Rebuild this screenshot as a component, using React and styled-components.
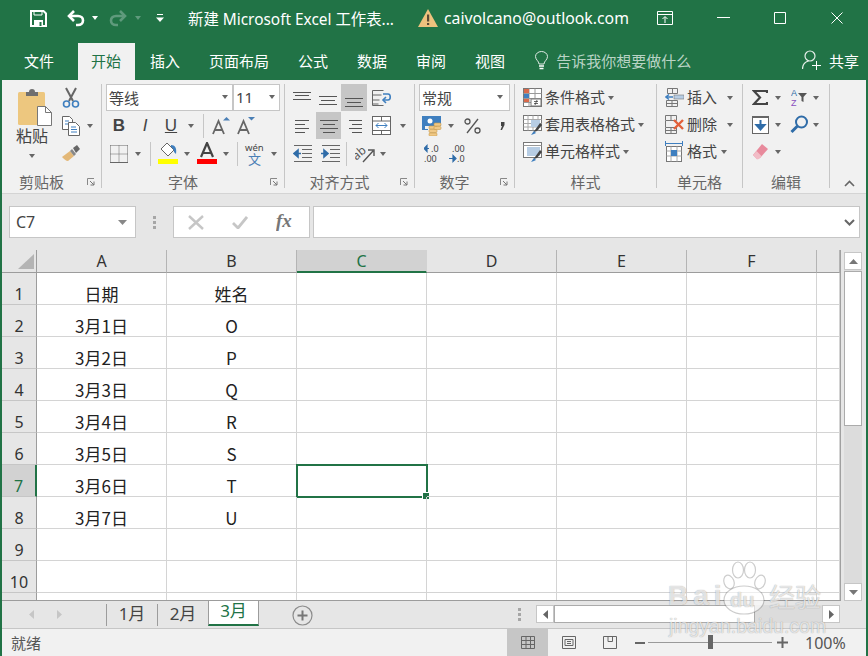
import styled, { createGlobalStyle } from "styled-components";

const UI_FONT = `"Noto Sans", "Noto Sans CJK SC", sans-serif`;
const GREEN = "#217346";

const GlobalStyle = createGlobalStyle`
  html, body {
    margin: 0;
    padding: 0;
    background: #e6e6e6;
    font-family: ${UI_FONT};
  }
  * { box-sizing: border-box; }
  svg { display: block; flex: none; }
`;

const Window = styled.div`
  position: relative;
  width: 868px;
  height: 656px;
  overflow: hidden;
  display: flex;
  flex-direction: column;
  border-left: 2px solid ${GREEN};
  border-right: 2px solid ${GREEN};
  background: #e6e6e6;
`;

/* ---------- title bar ---------- */
const TitleBar = styled.div`
  display: flex;
  align-items: center;
  height: 43px;
  padding: 0 0 7px 28px;
  background: ${GREEN};
  color: #fff;
  flex: none;
`;
const TitleItem = styled.div`
  display: flex;
  align-items: center;
  justify-content: center;
  margin-left: ${(p) => p.$ml || 0}px;
`;
const TitleText = styled.span`
  font-size: ${(p) => p.$size}px;
  margin-left: ${(p) => p.$ml || 0}px;
  white-space: nowrap;
`;
const QatCaret = styled.i`
  display: block;
  margin-left: ${(p) => p.$ml || 0}px;
  border-left: 3.5px solid transparent;
  border-right: 3.5px solid transparent;
  border-top: 4px solid ${(p) => p.$color || "#fff"};
`;

/* ---------- tabs ---------- */
const TabBar = styled.div`
  display: flex;
  align-items: stretch;
  height: 37px;
  background: ${GREEN};
  padding-left: 8px;
  flex: none;
`;
const Tab = styled.div`
  display: flex;
  align-items: center;
  padding: 0 14px 3px ${(p) => (p.$active ? 13 : 14)}px;
  margin-right: ${(p) => p.$mr ?? 1}px;
  font-size: 15px;
  color: ${(p) => (p.$active ? GREEN : "#fff")};
  background: ${(p) => (p.$active ? "#f1f1f1" : "transparent")};
  white-space: nowrap;
`;
const TellMe = styled.div`
  display: flex;
  align-items: center;
  gap: 8px;
  margin-left: 15px;
  padding-bottom: 2px;
  font-size: 15px;
  color: #b9d3c5;
  white-space: nowrap;
`;
const Share = styled.div`
  display: flex;
  align-items: center;
  gap: 8px;
  margin-left: auto;
  padding: 0 7px 3px 0;
  font-size: 15px;
  color: #fff;
`;

/* ---------- ribbon ---------- */
const Ribbon = styled.div`
  display: flex;
  height: 114px;
  background: #f1f1f1;
  border-bottom: 1px solid #d4d4d4;
  flex: none;
`;
const Group = styled.section`
  display: flex;
  flex-direction: column;
  width: ${(p) => p.$w}px;
  height: 104px;
  margin-top: 4px;
  border-right: 1px solid #c6c6c6;
`;
const GroupBody = styled.div`
  height: 88px;
  flex: none;
  display: flex;
  padding-left: ${(p) => p.$pl || 0}px;
`;
const Stack = styled.div`
  display: flex;
  flex-direction: column;
  gap: ${(p) => p.$gap ?? 1}px;
`;
const Row = styled.div`
  display: flex;
  align-items: center;
  height: 27px;
`;
const GroupFoot = styled.div`
  display: grid;
  grid-template-columns: ${(p) => (p.$launcher ? "1fr 20px" : "1fr")};
  align-items: center;
  justify-items: center;
  height: 20px;
  flex: none;
  font-size: 15px;
  line-height: 20px;
  color: #666;
`;
const Tool = styled.div`
  display: flex;
  align-items: center;
  justify-content: center;
  width: ${(p) => p.$w || 26}px;
  height: 27px;
  flex: none;
  margin-left: ${(p) => p.$ml || 0}px;
  background: ${(p) => (p.$active ? "#c6c6c6" : "transparent")};
  color: #444;
`;
const LetterTool = styled(Tool)`
  font-family: "Liberation Sans", sans-serif;
  font-size: 17px;
  font-weight: ${(p) => (p.$bold ? 700 : 400)};
  font-style: ${(p) => (p.$italic ? "italic" : "normal")};
  text-decoration: ${(p) => (p.$under ? "underline" : "none")};
`;
const Caret = styled.div`
  display: flex;
  align-items: center;
  justify-content: center;
  width: ${(p) => p.$w || 14}px;
  height: 27px;
  flex: none;
  margin-left: ${(p) => p.$ml || 0}px;
  &::after {
    content: "";
    border-left: 3.5px solid transparent;
    border-right: 3.5px solid transparent;
    border-top: 4px solid #666;
  }
`;
const RuleV = styled.div`
  width: 1px;
  height: 24px;
  background: #c6c6c6;
  flex: none;
  margin: 0 ${(p) => p.$mr ?? 5}px 0 ${(p) => p.$ml ?? 4}px;
`;
const Combo = styled.div`
  display: flex;
  align-items: center;
  justify-content: space-between;
  width: ${(p) => p.$w}px;
  height: 27px;
  padding: 0 0 1px 2px;
  background: #fff;
  border: 1px solid #c6c6c6;
  margin-left: ${(p) => p.$ml || 0}px;
  font-size: 15px;
  color: #444;
  flex: none;
`;
const PasteButton = styled.div`
  display: flex;
  flex-direction: column;
  align-items: center;
  width: 40px;
  padding-top: 4px;
  font-size: 16px;
  line-height: 20px;
  color: #444;
`;
const PasteIcon = styled.div`
  width: 34px;
  height: 38px;
  margin-left: 6px;
`;
const PasteCaret = styled.i`
  display: block;
  margin-top: 8px;
  border-left: 3.5px solid transparent;
  border-right: 3.5px solid transparent;
  border-top: 4px solid #666;
`;
const CommandRow = styled.div`
  display: flex;
  align-items: center;
  height: 27px;
  font-size: 15px;
  color: #444;
  white-space: nowrap;
`;
const CommandLabel = styled.span`
  line-height: 24px;
  height: 26px;
`;
const CommandIcon = styled.div`
  display: flex;
  align-items: center;
  width: ${(p) => p.$w || 22}px;
  flex: none;
`;
const Collapse = styled.div`
  display: flex;
  align-items: flex-end;
  flex: 1;
  justify-content: center;
  padding: 0 0 6px 2px;
`;

/* ---------- formula bar ---------- */
const FormulaBar = styled.div`
  display: flex;
  align-items: center;
  height: 56px;
  padding: 0 6px 0 7px;
  flex: none;
`;
const NameBox = styled.div`
  display: flex;
  align-items: center;
  justify-content: space-between;
  width: 127px;
  height: 32px;
  padding: 0 8px 0 6px;
  background: #fff;
  border: 1px solid #c6c6c6;
  font-size: 16px;
  color: #444;
`;
const Grip = styled.div`
  display: flex;
  flex-direction: column;
  gap: 2px;
  margin: ${(p) => p.$margin};
  i {
    display: block;
    width: 3px;
    height: 3px;
    background: #a6a6a6;
  }
`;
const FxBox = styled.div`
  display: flex;
  align-items: center;
  width: 137px;
  height: 32px;
  background: #fff;
  border: 1px solid #c6c6c6;
  padding-left: 14px;
  gap: 28px;
`;
const FormulaInput = styled.div`
  flex: 1;
  display: flex;
  align-items: center;
  justify-content: flex-end;
  height: 32px;
  margin-left: 3px;
  padding-right: 4px;
  background: #fff;
  border: 1px solid #c6c6c6;
`;

/* ---------- sheet ---------- */
const SheetArea = styled.div`
  display: flex;
  height: 351px;
  flex: none;
`;
const Sheet = styled.div`
  width: 839px;
  overflow: hidden;
  border-right: 1px solid #a0a0a0;
  border-bottom: 1px solid #9c9c9c;
  background: #fff;
  flex: none;
`;
const GridRow = styled.div`
  display: grid;
  grid-template-columns: 35px repeat(6, 130px) 1fr;
  grid-template-rows: ${(p) => p.$h || 32}px;
  height: ${(p) => p.$h || 32}px;
`;
const ColHead = styled.div`
  display: flex;
  align-items: center;
  justify-content: center;
  font-size: 16px;
  line-height: 20px;
  background: ${(p) => (p.$selected ? "#d2d2d2" : "#e6e6e6")};
  color: ${(p) => (p.$selected ? GREEN : "#333")};
  border-right: 1px solid ${(p) => (p.$selected ? "#d2d2d2" : "#b4b4b4")};
  border-bottom: ${(p) => (p.$selected ? `2px solid ${GREEN}` : "1px solid #9c9c9c")};
`;
const Corner = styled(ColHead)`
  justify-content: flex-end;
  align-items: flex-end;
  padding: 0 2px 3px 0;
  border-right-color: #9c9c9c;
`;
const RowHead = styled.div`
  display: flex;
  align-items: center;
  justify-content: center;
  padding-top: 11px;
  font-size: 16px;
  line-height: 20px;
  background: ${(p) => (p.$selected ? "#d2d2d2" : "#e6e6e6")};
  color: ${(p) => (p.$selected ? GREEN : "#333")};
  border-right: ${(p) => (p.$selected ? `2px solid ${GREEN}` : "1px solid #9c9c9c")};
  border-bottom: 1px solid #c6c6c6;
`;
const Cell = styled.div`
  position: relative;
  display: flex;
  align-items: center;
  justify-content: center;
  padding-top: 10px;
  font-family: "Noto Sans CJK SC", sans-serif;
  font-size: 17px;
  line-height: 20px;
  color: #222;
  border-right: 1px solid #d4d4d4;
  border-bottom: 1px solid #d4d4d4;
`;
const Selection = styled.div`
  position: absolute;
  left: -1px;
  top: -1px;
  right: -2px;
  bottom: -2px;
  border: 2px solid ${GREEN};
  &::after {
    content: "";
    position: absolute;
    right: -4px;
    bottom: -4px;
    width: 6px;
    height: 6px;
    background: ${GREEN};
    border: 1px solid #fff;
  }
`;
const VScroll = styled.div`
  display: flex;
  flex-direction: column;
  width: 18px;
  margin-left: 3px;
  padding-top: 2px;
  gap: 1px;
  background: linear-gradient(#e6e6e6 20px, #dcdcdc 20px);
`;
const ScrollBtn = styled.div`
  display: flex;
  align-items: center;
  justify-content: center;
  width: 18px;
  height: 18px;
  background: #fff;
  border: 1px solid #c6c6c6;
  flex: none;
`;
const VThumb = styled.div`
  height: 155px;
  background: #fff;
  border: 1px solid #ababab;
  margin-bottom: auto;
`;

/* ---------- sheet tabs ---------- */
const SheetBar = styled.div`
  display: flex;
  align-items: flex-start;
  height: 28px;
  border-bottom: 1px solid #c6c6c6;
  flex: none;
`;
const SheetNav = styled.div`
  display: flex;
  align-items: center;
  gap: 23px;
  width: 104px;
  height: 22px;
  padding: 4px 0 0 27px;
`;
const SheetTab = styled.div`
  display: flex;
  justify-content: center;
  width: 51px;
  height: ${(p) => (p.$active ? 26 : 22)}px;
  margin-top: ${(p) => (p.$active ? -1 : 3)}px;
  font-size: 17px;
  line-height: 20px;
  color: ${(p) => (p.$active ? GREEN : "#444")};
  background: ${(p) => (p.$active ? "#fff" : "transparent")};
  border-left: 1px solid #9c9c9c;
  border-right: ${(p) => (p.$active ? "1px solid #9c9c9c" : "none")};
  border-top: ${(p) => (p.$active ? "1px solid #9c9c9c" : "none")};
  border-bottom: ${(p) => (p.$active ? `2px solid ${GREEN}` : "none")};
`;
const AddSheet = styled.div`
  margin: 4px 0 0 33px;
`;
const HScroll = styled.div`
  display: flex;
  width: 304px;
  height: 18px;
  margin: 4px 0 0 0;
  background: #dcdcdc;
`;
const HThumb = styled.div`
  width: 201px;
  background: #fff;
  border: 1px solid #ababab;
  margin: 0 auto 0 0;
`;

/* ---------- status bar ---------- */
const StatusBar = styled.div`
  display: flex;
  align-items: center;
  flex: 1;
  background: #f1f1f1;
  padding-left: 9px;
  font-size: 15px;
  color: #555;
`;
const ViewBtn = styled.div`
  display: flex;
  align-items: center;
  justify-content: center;
  width: 41px;
  align-self: stretch;
  background: ${(p) => (p.$active ? "#c6c6c6" : "transparent")};
  margin-left: ${(p) => p.$ml || 0}px;
`;
const ZoomMinus = styled.i`
  display: block;
  width: 10px;
  height: 2px;
  margin-left: 5px;
  background: #666;
`;
const ZoomTrack = styled.div`
  position: relative;
  width: 124px;
  height: 1px;
  background: #9a9a9a;
  margin: 0 5px 0 3px;
  &::after {
    content: "";
    position: absolute;
    left: 60px;
    top: -7px;
    width: 5px;
    height: 14px;
    background: #666;
  }
`;
const ZoomPct = styled.span`
  margin-left: 17px;
  font-size: 16px;
  color: #555;
`;

/* ---------- watermark ---------- */
const Watermark = styled.div`
  position: absolute;
  left: 664px;
  top: 560px;
  width: 165px;
  height: 78px;
  color: rgba(255, 255, 255, 0.72);
  text-shadow: 0 0 1px rgba(0, 0, 0, 0.4);
  font-family: "Liberation Sans", sans-serif;
  pointer-events: none;
`;
const Paw = styled.div`
  position: absolute;
  left: 54px;
  top: 0;
`;
const MarkBai = styled.div`
  position: absolute;
  left: 2px;
  top: 20px;
  font-size: 28px;
  line-height: 32px;
  font-weight: 700;
  letter-spacing: 5px;
`;
const MarkDu = styled.div`
  position: absolute;
  left: 64px;
  top: 28px;
  font-size: 20px;
  line-height: 24px;
  font-weight: 700;
`;
const MarkCn = styled.div`
  position: absolute;
  left: 103px;
  top: 19px;
  font-family: "Noto Sans CJK SC", sans-serif;
  font-size: 26px;
  line-height: 34px;
  white-space: nowrap;
`;
const MarkUrl = styled.div`
  position: absolute;
  left: 3px;
  top: 55px;
  font-size: 19.5px;
  line-height: 22px;
  white-space: nowrap;
`;

/* ---------- drawings ---------- */
const Lines = ({ rows }) => (
  <svg width="26" height="27" viewBox="0 0 26 27">
    {rows.map(([a, b, y]) => (
      <path key={y} d={`M${a} ${y + 0.5}H${b}`} stroke="#555" fill="none" />
    ))}
  </svg>
);

const Paste = () => (
  <svg width="34" height="38" viewBox="0 0 34 38">
    <rect x="0" y="4" width="27" height="33" rx="1.5" fill="#edc77f" />
    <path d="M8 4h3a3 3 0 0 1 6 0h3v4H8z" fill="#6f6f6f" />
    <path d="M19.5 18.5h8l6 6v13h-14z" fill="#fff" stroke="#777" />
    <path d="M27.5 18.5v6h6" fill="none" stroke="#777" />
  </svg>
);
const Scissors = () => (
  <svg width="18" height="22" viewBox="0 0 18 22">
    <path d="M4 1l7 13M14 1L7 14" stroke="#666" strokeWidth="2" fill="none" />
    <circle cx="4.5" cy="17" r="3" fill="none" stroke="#3f7fbf" strokeWidth="1.6" />
    <circle cx="13.5" cy="17" r="3" fill="none" stroke="#3f7fbf" strokeWidth="1.6" />
  </svg>
);
const Copy = () => (
  <svg width="18" height="20" viewBox="0 0 18 20">
    <path d="M.5.5h7l3 3v10H.5z" fill="#fff" stroke="#666" />
    <path d="M6.5 6.5h7l4 4v9h-11z" fill="#fff" stroke="#666" />
    <path d="M3 5h4M3 8h3M9 11h5M9 13.5h6M9 16h6" stroke="#3f7fbf" fill="none" />
  </svg>
);
const Brush = () => (
  <svg width="19" height="17" viewBox="0 0 19 17">
    <path d="M0 12l8-6 4 5-6 5c-2 0-4-2-6-4z" fill="#e3b878" />
    <path d="M8 6l2-2 4 5-2 2z" fill="#888" />
    <path d="M11 3l4-3 3 4-4 4z" fill="#666" />
  </svg>
);
const GrowA = ({ down }) => (
  <svg width="20" height="19" viewBox="0 0 20 19">
    <path d="M2 18L7.5 5 13 18M4 14h7" stroke="#666" strokeWidth="1.8" fill="none" />
    <path d={down ? "M12 1h7l-3.5 3.5z" : "M12 4.5h7L15.5 1z"} fill="#4a7fb5" />
  </svg>
);
const BorderIcon = () => (
  <svg width="18" height="18" viewBox="0 0 18 18">
    <path
      d="M.5.5h17M.5 9h17M.5.5v17M9 .5v17M17.5 .5v17"
      stroke="#666"
      strokeDasharray="1 1"
      fill="none"
    />
    <path d="M0 17.5h18" stroke="#666" fill="none" />
  </svg>
);
const FillIcon = () => (
  <svg width="20" height="23" viewBox="0 0 20 23">
    <path d="M9 1l7 7-6 6-7-7z" fill="#fff" stroke="#666" />
    <path d="M13 3c4 0 6 3 5 9l-2-2c0-2-1-4-3-5z" fill="#3f7fbf" />
    <rect y="17" width="20" height="5" fill="#ffff00" />
  </svg>
);
const ColorIcon = () => (
  <svg width="20" height="23" viewBox="0 0 20 23">
    <path d="M4 15L10 1l6 14M6 11h8" stroke="#444" strokeWidth="2.2" fill="none" />
    <rect y="17" width="20" height="5" fill="#ff0000" />
  </svg>
);
const Wen = () => (
  <svg width="22" height="24" viewBox="0 0 22 24">
    <text x="1" y="9" fontSize="9.5" fontFamily="Noto Sans" fill="#444">wén</text>
    <text x="4" y="22" fontSize="13" fontFamily="Noto Sans CJK SC" fill="#4a7fb5">文</text>
  </svg>
);
const Wrap = () => (
  <svg width="20" height="18" viewBox="0 0 20 18">
    <path d="M.5 1.5h11M.5 1.5v15h11M.5 6h9M.5 11h7M.5 15h6" stroke="#666" fill="none" />
    <path d="M11 5h5c3 0 3 6 0 6h-4" stroke="#3f7fbf" strokeWidth="1.6" fill="none" />
    <path d="M14 8l-3 3 3 3" stroke="#3f7fbf" strokeWidth="1.6" fill="none" />
  </svg>
);
const Merge = () => (
  <svg width="20" height="20" viewBox="0 0 20 20">
    <rect x=".5" y=".5" width="18" height="18" fill="#fff" stroke="#666" />
    <path d="M.5 5h18M.5 14.5h18M9.5 .5V5M9.5 14.5v4" stroke="#666" fill="none" />
    <path d="M4 9.5h11M6.5 7l-2.5 2.5L6.5 12M12.5 7l2.5 2.5-2.5 2.5" stroke="#3f7fbf" fill="none" />
  </svg>
);
const Indent = ({ right }) => (
  <svg width="20" height="17" viewBox="0 0 20 17">
    <path d="M1 .5h18M9 4.5h10M9 8.5h10M9 12.5h10M1 16.5h18" stroke="#666" fill="none" />
    {right ? (
      <path d="M0 8.5h5M3 5l4 3.5L3 12z" stroke="#2f6ca8" strokeWidth="1.6" fill="#2f6ca8" />
    ) : (
      <path d="M8 8.5H3M5 5L1 8.5 5 12z" stroke="#2f6ca8" strokeWidth="1.6" fill="#2f6ca8" />
    )}
  </svg>
);
const Orient = () => (
  <svg width="20" height="20" viewBox="0 0 20 20">
    <text x="-2" y="12" fontSize="12" fontFamily="Noto Sans" fill="#555" transform="rotate(-40 6 10)">ab</text>
    <path d="M8 18L18 7M13 6h6v6" stroke="#555" strokeWidth="1.4" fill="none" />
  </svg>
);
const Currency = () => (
  <svg width="20" height="20" viewBox="0 0 20 20">
    <rect x="0" y="0" width="19" height="10" fill="#3f7fbf" />
    <circle cx="8" cy="5" r="2.5" fill="#fff" />
    <path d="M0 10h3v3h3v1H0z" fill="#3f7fbf" />
    <g fill="#f0c987" stroke="#c99b4a" strokeWidth=".6">
      <rect x="7" y="10" width="8" height="3" rx="1" />
      <rect x="7" y="13.5" width="8" height="3" rx="1" />
      <rect x="7" y="17" width="8" height="3" rx="1" />
      <rect x="12" y="7" width="7" height="3" rx="1" />
      <rect x="12" y="10.5" width="7" height="3" rx="1" />
    </g>
  </svg>
);
const Decimal = ({ more }) => (
  <svg width="18" height="20" viewBox="0 0 18 20" fontFamily="Noto Sans" fontSize="9" fill="#444">
    {more ? (
      <>
        <path d="M0 4.5h5M3 1.5L0 4.5l3 3z" stroke="#2f6ca8" strokeWidth="1.2" fill="#2f6ca8" />
        <text x="7" y="8">.0</text>
        <text x="0" y="18">.00</text>
      </>
    ) : (
      <>
        <text x="3" y="8">.00</text>
        <path d="M0 14.5h5M4 11.5l3 3-3 3z" stroke="#2f6ca8" strokeWidth="1.2" fill="#2f6ca8" />
        <text x="8" y="18">.0</text>
      </>
    )}
  </svg>
);
const CondFormat = () => (
  <svg width="19" height="19" viewBox="0 0 19 19">
    <rect x=".5" y=".5" width="18" height="18" fill="#fff" stroke="#777" />
    <path d="M6 .5v18M12 .5V10M.5 5.5h18M.5 10.5h18M.5 14.5H8" stroke="#999" fill="none" />
    <rect x="1" y="1" width="5" height="4" fill="#d9694a" />
    <rect x="1" y="6" width="5" height="4" fill="#3f7fbf" />
    <rect x="1" y="11" width="5" height="3" fill="#d9694a" />
    <rect x="8" y="11" width="10" height="7" fill="#fff" stroke="#777" />
    <path d="M11 13.5h4M11 15.5h4M14 12l-2 5" stroke="#444" strokeWidth=".8" fill="none" />
  </svg>
);
const TableFormat = ({ plain }) => (
  <svg width="20" height="20" viewBox="0 0 20 20">
    <rect x=".5" y=".5" width="18" height="15" fill="#fff" stroke="#777" />
    {plain ? (
      <>
        <path d="M.5 3.5h18" stroke="#999" fill="none" />
        <rect x="4" y="5" width="13" height="9" fill="#b7cde4" />
      </>
    ) : (
      <>
        <path d="M.5 4.5h18M.5 8.5h18M.5 12h18M5 .5v15M10 .5v15M15 .5v15" stroke="#aaa" fill="none" />
        <rect x="8" y="5" width="9" height="7" fill="#b7cde4" />
      </>
    )}
    <path d="M9 19l3-4 5-7 2 2-5 6-3 1z" fill="#444" />
    <path d="M8 20l3-4 2 2-2 1z" fill="#3f7fbf" />
  </svg>
);
const CellInsert = () => (
  <svg width="19" height="19" viewBox="0 0 19 19">
    <path d="M2.5 .5h10v5h-10zM7.5 .5v5M1.5 12.5h11v6h-11zM7 12.5v6M1.5 15.5h11" stroke="#777" fill="none" />
    <rect x="9" y="7" width="10" height="4" fill="#b7cde4" stroke="#777" strokeWidth=".6" />
    <path d="M1 9h7M4 6.5L1 9l3 2.5" stroke="#3f7fbf" strokeWidth="1.5" fill="none" />
  </svg>
);
const CellDelete = () => (
  <svg width="20" height="19" viewBox="0 0 20 19">
    <path d="M.5 .5h11v5H.5zM6 .5v5M.5 12.5h11v6H.5zM6 12.5v6M.5 15.5h11M.5 6v6" stroke="#777" fill="none" />
    <path d="M9 5l9 9M18 5l-9 9" stroke="#e2603a" strokeWidth="2.4" fill="none" />
  </svg>
);
const CellFormat = () => (
  <svg width="20" height="22" viewBox="0 0 20 22">
    <path d="M.5 2.5h17M.5 0v5M17.5 0v5" stroke="#3f7fbf" fill="none" />
    <rect x="1.5" y="5.5" width="15" height="15" fill="#fff" stroke="#777" />
    <path d="M1.5 10h15M1.5 15h15M6 5.5v15M12 5.5v15" stroke="#aaa" fill="none" />
    <rect x="6" y="9" width="6" height="6" fill="#3f7fbf" />
  </svg>
);
const FillDown = () => (
  <svg width="17" height="18" viewBox="0 0 17 18">
    <rect x=".5" y=".5" width="16" height="17" fill="#fff" stroke="#666" />
    <path d="M0 0h17v2H0z" fill="#666" />
    <path d="M8.5 4v8M4.5 9l4 4.5 4-4.5z" stroke="#2f6ca8" strokeWidth="2" fill="#2f6ca8" />
  </svg>
);
const Search = () => (
  <svg width="19" height="19" viewBox="0 0 19 19">
    <circle cx="11.5" cy="7" r="5.5" fill="none" stroke="#2f6ca8" strokeWidth="2" />
    <path d="M7.5 11L1.5 17" stroke="#2f6ca8" strokeWidth="3" fill="none" />
  </svg>
);
const Eraser = () => (
  <svg width="17" height="17" viewBox="0 0 17 17">
    <path d="M10 1l6 5-8 9-3 1-4-4z" fill="#e88a9c" />
    <path d="M1 12l3.5-4 5 5L7 16l-2 .5z" fill="#f2bcc6" />
  </svg>
);
const SortFilter = () => (
  <svg width="16" height="19" viewBox="0 0 16 19">
    <text x="0" y="8" fontSize="9" fontFamily="Liberation Sans" fill="#2f6ca8">A</text>
    <text x="0" y="18" fontSize="9" fontFamily="Liberation Sans" fill="#8a4fbf">Z</text>
    <path d="M7 5h9l-3.5 4v5l-2-1V9z" fill="#555" />
  </svg>
);
const Launcher = () => (
  <svg width="8" height="8" viewBox="0 0 8 8">
    <path d="M.5 7V.5H7" stroke="#888" fill="none" />
    <path d="M3 3l4 4M7 3.5V7H3.5" stroke="#777" fill="none" />
  </svg>
);

const GridData = [
  ["日期", "姓名"],
  ["3月1日", "O"],
  ["3月2日", "P"],
  ["3月3日", "Q"],
  ["3月4日", "R"],
  ["3月5日", "S"],
  ["3月6日", "T"],
  ["3月7日", "U"],
  ["", ""],
  ["", ""],
  ["", ""],
];

const ALIGN_ICONS = [
  [[3, 21, 8], [5, 19, 11], [3, 21, 15]],
  [[3, 21, 12], [5, 19, 16], [3, 21, 20]],
  [[4, 22, 14], [6, 20, 18], [4, 22, 22]],
  [[5, 19, 8], [5, 15, 12], [5, 19, 16], [5, 15, 20]],
  [[4, 22, 8], [7, 19, 12], [4, 22, 16], [7, 19, 20]],
  [[8, 21, 8], [11, 21, 12], [8, 21, 16], [11, 21, 20]],
];

export default function App() {
  return (
    <Window>
      <GlobalStyle />
      <TitleBar>
        <TitleItem>
          <svg width="17" height="17" viewBox="0 0 17 17">
            <path d="M1 1h12.5L16 3.5V16H1z" fill="none" stroke="#fff" strokeWidth="2" />
            <path d="M4 1h8v4H4z" fill="none" stroke="#fff" />
            <path d="M4 10h9v6H4z" fill="#fff" />
            <path d="M9.5 12h2v4h-2z" fill={GREEN} />
          </svg>
        </TitleItem>
        <TitleItem $ml={19}>
          <svg width="19" height="17" viewBox="0 0 19 17">
            <path d="M3 6h9c3 0 5 2 5 4.500S15 15 12 15h-2" stroke="#fff" strokeWidth="2.6" fill="none" />
            <path d="M8 1L3 6l5 5" stroke="#fff" strokeWidth="2.6" fill="none" />
          </svg>
        </TitleItem>
        <QatCaret $ml={7} />
        <TitleItem $ml={11}>
          <svg width="19" height="17" viewBox="0 0 19 17">
            <path d="M16 6H7c-3 0-5 2-5 4.500S4 15 7 15h2" stroke="#5f9a7c" strokeWidth="2.6" fill="none" />
            <path d="M11 1l5 5-5 5" stroke="#5f9a7c" strokeWidth="2.6" fill="none" />
          </svg>
        </TitleItem>
        <QatCaret $ml={7} $color="#5f9a7c" />
        <TitleItem $ml={15}>
          <svg width="8" height="9" viewBox="0 0 8 9">
            <path d="M1 .5h6" stroke="#fff" fill="none" />
            <path d="M0 3.5h8L4 8z" fill="#fff" />
          </svg>
        </TitleItem>
        <TitleText $ml={24} $size={15.4}>新建 Microsoft Excel 工作表...</TitleText>
        <TitleItem $ml={24}>
          <svg width="20" height="18" viewBox="0 0 20 18">
            <path d="M10 0l10 18H0z" fill="#eec27e" />
            <path d="M9 5.5h2.2v7H9zM9 14h2.2v2H9z" fill="#5a4a35" />
          </svg>
        </TitleItem>
        <TitleText $ml={6} $size={15.8}>caivolcano@outlook.com</TitleText>
        <TitleItem $ml={28}>
          <svg width="16" height="14" viewBox="0 0 16 14">
            <path d="M.5 .5h15v13H.5zM.5 3.5h15" stroke="#fff" fill="none" />
            <path d="M8 12V6M5.5 8L8 5.5 10.5 8" stroke="#fff" fill="none" />
          </svg>
        </TitleItem>
        <TitleItem $ml={44}>
          <svg width="13" height="12" viewBox="0 0 13 12">
            <path d="M0 5.5h13" stroke="#fff" fill="none" />
          </svg>
        </TitleItem>
        <TitleItem $ml={44}>
          <svg width="12" height="12" viewBox="0 0 12 12">
            <path d="M.5 .5h11v11H.5z" stroke="#fff" fill="none" />
          </svg>
        </TitleItem>
        <TitleItem $ml={45}>
          <svg width="12" height="12" viewBox="0 0 12 12">
            <path d="M.5 .5l11 11M11.5 .5l-11 11" stroke="#fff" fill="none" />
          </svg>
        </TitleItem>
      </TitleBar>

      <TabBar>
        <Tab $mr={10}>文件</Tab>
        <Tab $active>开始</Tab>
        <Tab>插入</Tab>
        <Tab>页面布局</Tab>
        <Tab>公式</Tab>
        <Tab>数据</Tab>
        <Tab>审阅</Tab>
        <Tab>视图</Tab>
        <TellMe>
          <svg width="13" height="19" viewBox="0 0 13 19">
            <path d="M4 13c0-3-3.5-4-3.5-7.5a6 5 0 0 1 12 0C12.5 9 9 10 9 13z" fill="none" stroke="#dfeae4" />
            <path d="M4 15h5M4.5 17.5h4" stroke="#fff" strokeWidth="1.4" fill="none" />
          </svg>
          告诉我你想要做什么
        </TellMe>
        <Share>
          <svg width="19" height="20" viewBox="0 0 19 20">
            <circle cx="8" cy="6" r="5" fill="none" stroke="#e6efea" strokeWidth="1.2" />
            <path d="M.5 19c0-4 2.500-7 6-8" stroke="#e6efea" strokeWidth="1.2" fill="none" />
            <path d="M10 15.5h9M14.5 11v9" stroke="#fff" fill="none" />
          </svg>
          共享
        </Share>
      </TabBar>

      <Ribbon>
        <Group $w={100}>
          <GroupBody $pl={10}>
            <PasteButton>
              <PasteIcon>
                <Paste />
              </PasteIcon>
              <span>粘贴</span>
              <PasteCaret />
            </PasteButton>
            <Stack>
              <Tool $ml={6} $w={26}><Scissors /></Tool>
              <Row>
                <Tool $ml={6} $w={26}><Copy /></Tool>
                <Caret $w={12} />
              </Row>
              <Row>
                <Tool $ml={6} $w={26}><Brush /></Tool>
              </Row>
            </Stack>
          </GroupBody>
          <GroupFoot $launcher>
            <span>剪贴板</span>
            <Launcher />
          </GroupFoot>
        </Group>

        <Group $w={183}>
          <GroupBody $pl={4}>
            <Stack>
              <Row>
                <Combo $w={127}>
                  等线
                  <Caret $w={14} />
                </Combo>
                <Combo $w={47}>
                  11
                  <Caret $w={14} />
                </Combo>
              </Row>
              <Row>
                <LetterTool $bold>B</LetterTool>
                <LetterTool $italic>I</LetterTool>
                <LetterTool $under>U</LetterTool>
                <Caret />
                <RuleV $ml={5} />
                <Tool $w={24}><GrowA /></Tool>
                <Tool $w={25}><GrowA down /></Tool>
              </Row>
              <Row>
                <Tool $w={25}><BorderIcon /></Tool>
                <Caret />
                <RuleV $ml={5} $mr={4} />
                <Tool $w={25}><FillIcon /></Tool>
                <Caret />
                <Tool $w={25}><ColorIcon /></Tool>
                <Caret />
                <RuleV $ml={4} $mr={4} />
                <Tool $w={25}><Wen /></Tool>
                <Caret />
              </Row>
            </Stack>
          </GroupBody>
          <GroupFoot $launcher>
            <span>字体</span>
            <Launcher />
          </GroupFoot>
        </Group>

        <Group $w={130}>
          <GroupBody $pl={5}>
            <Stack>
              <Row>
                <Tool><Lines rows={ALIGN_ICONS[0]} /></Tool>
                <Tool $w={25}><Lines rows={ALIGN_ICONS[1]} /></Tool>
                <Tool $active><Lines rows={ALIGN_ICONS[2]} /></Tool>
                <Tool $w={30}><Wrap /></Tool>
              </Row>
              <Row>
                <Tool><Lines rows={ALIGN_ICONS[3]} /></Tool>
                <Tool $active $w={25}><Lines rows={ALIGN_ICONS[4]} /></Tool>
                <Tool><Lines rows={ALIGN_ICONS[5]} /></Tool>
                <Tool $w={30}><Merge /></Tool>
                <Caret $w={12} />
              </Row>
              <Row>
                <Tool><Indent /></Tool>
                <Tool $w={30}><Indent right /></Tool>
                <RuleV $ml={0} $mr={5} />
                <Tool><Orient /></Tool>
                <Caret $w={10} />
              </Row>
            </Stack>
          </GroupBody>
          <GroupFoot $launcher>
            <span>对齐方式</span>
            <Launcher />
          </GroupFoot>
        </Group>

        <Group $w={100}>
          <GroupBody $pl={4}>
            <Stack>
              <Row>
                <Combo $w={91}>
                  常规
                  <Caret $w={18} />
                </Combo>
              </Row>
              <Row>
                <Tool $w={26}><Currency /></Tool>
                <Caret $w={11} />
                <Tool $w={32}>
                  <svg width="17" height="16" viewBox="0 0 17 16">
                    <circle cx="3.5" cy="3.5" r="2.5" fill="none" stroke="#555" strokeWidth="1.3" />
                    <circle cx="13.5" cy="12.5" r="2.5" fill="none" stroke="#555" strokeWidth="1.3" />
                    <path d="M14 1L3 15" stroke="#555" strokeWidth="1.3" fill="none" />
                  </svg>
                </Tool>
                <Tool $w={20} $ml={4}>
                  <svg width="5" height="8" viewBox="0 0 5 8">
                    <path d="M1 0h3.5v3L2 8H.5L2 4H1z" fill="#444" />
                  </svg>
                </Tool>
              </Row>
              <Row>
                <Tool $w={24} $ml={2}><Decimal more /></Tool>
                <Tool $w={26}><Decimal /></Tool>
              </Row>
            </Stack>
          </GroupBody>
          <GroupFoot $launcher>
            <span>数字</span>
            <Launcher />
          </GroupFoot>
        </Group>

        <Group $w={142}>
          <GroupBody $pl={8}>
            <Stack $gap={0}>
              <CommandRow>
                <CommandIcon><CondFormat /></CommandIcon>
                <CommandLabel>条件格式</CommandLabel>
                <Caret $w={11} />
              </CommandRow>
              <CommandRow>
                <CommandIcon><TableFormat /></CommandIcon>
                <CommandLabel>套用表格格式</CommandLabel>
                <Caret $w={11} />
              </CommandRow>
              <CommandRow>
                <CommandIcon><TableFormat plain /></CommandIcon>
                <CommandLabel>单元格样式</CommandLabel>
                <Caret $w={11} />
              </CommandRow>
            </Stack>
          </GroupBody>
          <GroupFoot>样式</GroupFoot>
        </Group>

        <Group $w={86}>
          <GroupBody $pl={8}>
            <Stack $gap={0}>
              <CommandRow>
                <CommandIcon><CellInsert /></CommandIcon>
                <CommandLabel>插入</CommandLabel>
                <Caret $ml={6} />
              </CommandRow>
              <CommandRow>
                <CommandIcon><CellDelete /></CommandIcon>
                <CommandLabel>删除</CommandLabel>
                <Caret $ml={6} />
              </CommandRow>
              <CommandRow>
                <CommandIcon><CellFormat /></CommandIcon>
                <CommandLabel>格式</CommandLabel>
                <Caret $w={14} />
              </CommandRow>
            </Stack>
          </GroupBody>
          <GroupFoot>单元格</GroupFoot>
        </Group>

        <Group $w={87}>
          <GroupBody $pl={8}>
            <Stack $gap={0}>
              <Row>
                <Tool $w={18}>
                  <svg width="16" height="15" viewBox="0 0 16 15">
                    <path d="M15 3V1H2l6 6.5L2 14h13v-2" stroke="#444" strokeWidth="2.2" fill="none" />
                  </svg>
                </Tool>
                <Caret $w={14} $ml={2} />
                <Tool $w={20} $ml={4}><SortFilter /></Tool>
                <Caret />
              </Row>
              <Row>
                <Tool $w={18}><FillDown /></Tool>
                <Caret $w={14} $ml={2} />
                <Tool $w={20} $ml={4}><Search /></Tool>
                <Caret />
              </Row>
              <Row>
                <Tool $w={18}><Eraser /></Tool>
                <Caret $w={14} $ml={2} />
              </Row>
            </Stack>
          </GroupBody>
          <GroupFoot>编辑</GroupFoot>
        </Group>

        <Collapse>
          <svg width="11" height="7" viewBox="0 0 11 7">
            <path d="M1 6l4.500-4.500L10 6" stroke="#666" strokeWidth="1.6" fill="none" />
          </svg>
        </Collapse>
      </Ribbon>

      <FormulaBar>
        <NameBox>
          C7
          <svg width="9" height="5" viewBox="0 0 9 5">
            <path d="M0 0h9L4.5 5z" fill="#888" />
          </svg>
        </NameBox>
        <Grip $margin="0 17px 0 17px">
          <i />
          <i />
          <i />
        </Grip>
        <FxBox>
          <svg width="16" height="15" viewBox="0 0 16 15">
            <path d="M1 1l14 13M15 1L1 14" stroke="#c6c6c6" strokeWidth="2.4" fill="none" />
          </svg>
          <svg width="16" height="13" viewBox="0 0 16 13">
            <path d="M1 7l5 5 9-11" stroke="#c6c6c6" strokeWidth="2.8" fill="none" />
          </svg>
          <svg width="18" height="20" viewBox="0 0 18 20">
            <text x="0" y="15" fontFamily="Liberation Serif" fontStyle="italic" fontWeight="700" fontSize="19" fill="#777">fx</text>
          </svg>
        </FxBox>
        <FormulaInput>
          <svg width="11" height="7" viewBox="0 0 11 7">
            <path d="M1 1l4.500 4.500L10 1" stroke="#666" strokeWidth="2" fill="none" />
          </svg>
        </FormulaInput>
      </FormulaBar>

      <SheetArea>
        <Sheet>
          <GridRow $h={23}>
            <Corner>
              <svg width="16" height="15" viewBox="0 0 16 15">
                <path d="M16 0v15H0z" fill="#b4b4b4" />
              </svg>
            </Corner>
            {["A", "B", "C", "D", "E", "F"].map((c) => (
              <ColHead key={c} $selected={c === "C"}>{c}</ColHead>
            ))}
            <ColHead />
          </GridRow>
          {GridData.map((row, i) => (
            <GridRow key={i}>
              <RowHead $selected={i === 6}>{i < 10 ? i + 1 : ""}</RowHead>
              <Cell>{row[0]}</Cell>
              <Cell>{row[1]}</Cell>
              <Cell>{i === 6 && <Selection />}</Cell>
              <Cell />
              <Cell />
              <Cell />
              <Cell />
            </GridRow>
          ))}
        </Sheet>
        <VScroll>
          <ScrollBtn>
            <svg width="9" height="5" viewBox="0 0 9 5">
              <path d="M0 5h9L4.5 0z" fill="#777" />
            </svg>
          </ScrollBtn>
          <VThumb />
          <ScrollBtn>
            <svg width="9" height="5" viewBox="0 0 9 5">
              <path d="M0 0h9L4.5 5z" fill="#777" />
            </svg>
          </ScrollBtn>
        </VScroll>
      </SheetArea>

      <SheetBar>
        <SheetNav>
          <svg width="5" height="9" viewBox="0 0 5 9"><path d="M5 0v9L0 4.5z" fill="#c6c6c6" /></svg>
          <svg width="5" height="9" viewBox="0 0 5 9"><path d="M0 0v9l5-4.500z" fill="#c6c6c6" /></svg>
        </SheetNav>
        <SheetTab>1月</SheetTab>
        <SheetTab>2月</SheetTab>
        <SheetTab $active>3月</SheetTab>
        <AddSheet>
          <svg width="21" height="21" viewBox="0 0 21 21">
            <circle cx="10.5" cy="10.5" r="9.5" fill="none" stroke="#8c8c8c" strokeWidth="1.2" />
            <path d="M5.5 10.5h10M10.5 5.5v10" stroke="#777" strokeWidth="2" fill="none" />
          </svg>
        </AddSheet>
        <Grip $margin="7px 15px 0 205px">
          <i />
          <i />
          <i />
        </Grip>
        <HScroll>
          <ScrollBtn>
            <svg width="5" height="9" viewBox="0 0 5 9"><path d="M5 0v9L0 4.5z" fill="#666" /></svg>
          </ScrollBtn>
          <HThumb />
          <ScrollBtn>
            <svg width="5" height="9" viewBox="0 0 5 9"><path d="M0 0v9l5-4.500z" fill="#666" /></svg>
          </ScrollBtn>
        </HScroll>
      </SheetBar>

      <StatusBar>
        就绪
        <ViewBtn $active $ml={466}>
          <svg width="14" height="13" viewBox="0 0 14 13">
            <path d="M.5 .5h13v12H.5zM.5 4.5h13M.5 8.5h13M5 .5v12M9.5 .5v12" stroke="#666" fill="none" />
          </svg>
        </ViewBtn>
        <ViewBtn>
          <svg width="14" height="13" viewBox="0 0 14 13">
            <path d="M.5 .5h13v12H.5z" stroke="#666" fill="none" />
            <path d="M3 3.5h8v6H3zM5 5.5h4M5 7.5h4" stroke="#666" fill="none" />
          </svg>
        </ViewBtn>
        <ViewBtn>
          <svg width="14" height="13" viewBox="0 0 14 13">
            <path d="M.5 .5h13v12H.5zM5 .5v5h4.500v-5" stroke="#666" fill="none" />
          </svg>
        </ViewBtn>
        <ZoomMinus />
        <ZoomTrack />
        <svg width="11" height="11" viewBox="0 0 11 11">
          <path d="M0 4.500h11v2H0zM4.500 0h2v11h-2z" fill="#666" />
        </svg>
        <ZoomPct>100%</ZoomPct>
      </StatusBar>

      <Watermark>
        <Paw>
          <svg width="50" height="56" viewBox="0 0 50 56">
            <g fill="rgba(255,255,255,.6)" stroke="rgba(0,0,0,.2)" strokeWidth="1.2">
              <ellipse cx="9" cy="22" rx="5" ry="7" transform="rotate(-20 9 22)" />
              <ellipse cx="18" cy="10" rx="5.5" ry="8" />
              <ellipse cx="30" cy="10" rx="5.5" ry="8" />
              <ellipse cx="40" cy="22" rx="5" ry="7" transform="rotate(20 40 22)" />
              <ellipse cx="24" cy="40" rx="20" ry="14" />
            </g>
          </svg>
        </Paw>
        <MarkBai>Bai</MarkBai>
        <MarkDu>du</MarkDu>
        <MarkCn>经验</MarkCn>
        <MarkUrl>jingyan.baidu.com</MarkUrl>
      </Watermark>
    </Window>
  );
}
